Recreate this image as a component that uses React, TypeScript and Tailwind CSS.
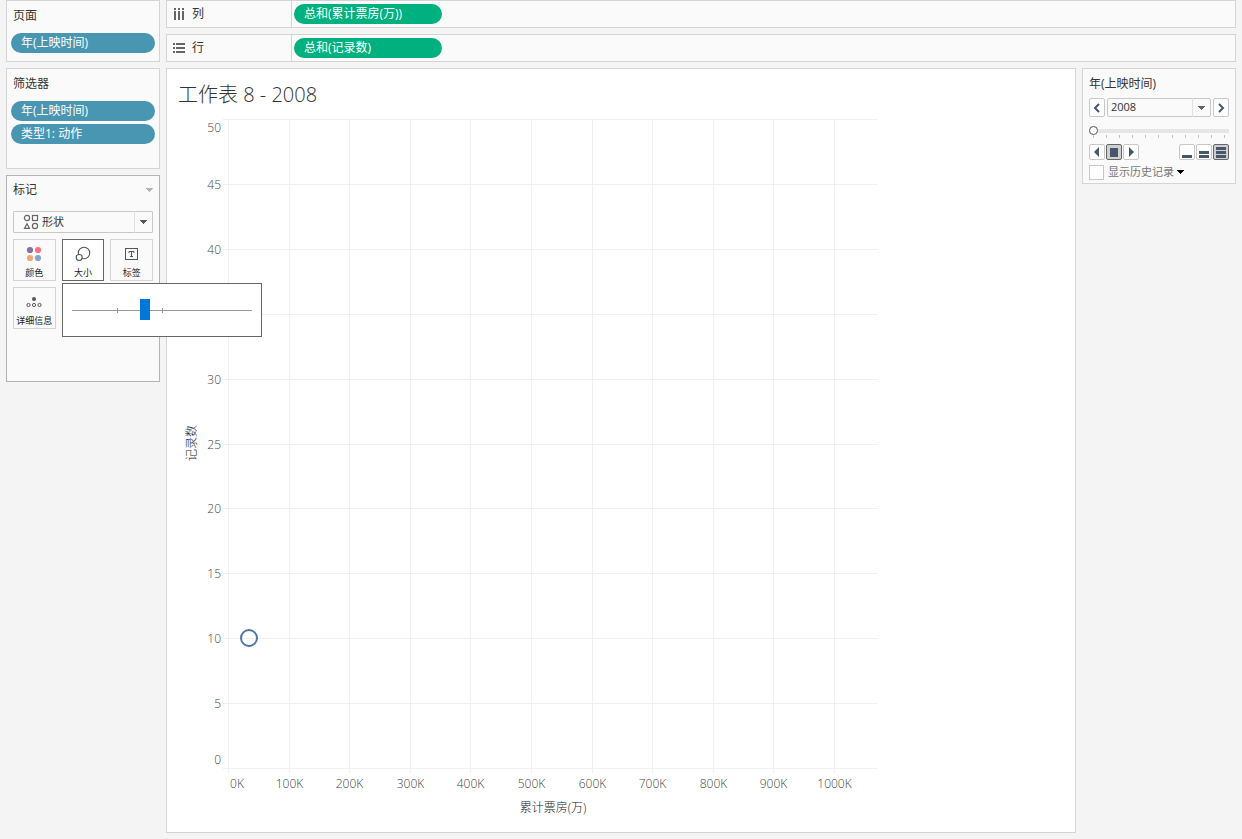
import { useState, type ReactNode } from "react";

const FONT = "font-['Open_Sans','Noto_Sans_CJK_SC',sans-serif]";

// ─── Small parts ──────────────────────────────────────────────────────────

function Caret({ className = "" }: { className?: string }) {
  return (
    <svg className={className} width="7" height="4" viewBox="0 0 7 4" shapeRendering="crispEdges" aria-hidden>
      <path d="M0 0h7L3.5 4z" fill="currentColor" />
    </svg>
  );
}

function Card({ title, children, className }: { title: string; children: ReactNode; className: string }) {
  return (
    <section className={`border border-[#d4d4d4] bg-[#fafafa] px-1 ${className}`}>
      <h2 className="h-7 pl-[2px] text-xs leading-[30px]">{title}</h2>
      <div className="mt-1 flex flex-col gap-[3px]">{children}</div>
    </section>
  );
}

function Pill({ children }: { children: ReactNode }) {
  return (
    <button className="h-5 w-full rounded-full bg-[#4996b2] px-[10px] text-left text-xs leading-5 text-white">
      {children}
    </button>
  );
}

function Shelf({ icon, label, pill }: { icon: ReactNode; label: string; pill: string }) {
  return (
    <section className="flex h-7 border border-[#d4d4d4] bg-[#fafafa]">
      <div className="flex w-[125px] items-center gap-[7px] border-r border-[#d4d4d4] pl-[6px]">
        {icon}
        <h2 className="text-xs leading-7">{label}</h2>
      </div>
      <button className="ml-[2px] mt-[3px] h-5 w-[148px] rounded-full bg-[#00b180] px-[10px] text-left text-xs leading-5 text-white">
        {pill}
      </button>
    </section>
  );
}

// ─── Marks card ───────────────────────────────────────────────────────────

function ShapesIcon({ className = "" }: { className?: string }) {
  return (
    <svg className={className} width="16" height="16" viewBox="0 0 16 16" fill="none" stroke="#666" strokeWidth="1.2">
      <circle cx="4" cy="4" r="2.6" />
      <rect x="9.5" y="1.5" width="5" height="5" />
      <path d="M4 9.8 6.5 14.4h-5z" />
      <circle cx="12" cy="12" r="2.6" />
    </svg>
  );
}

function ColorIcon() {
  return (
    <svg width="16" height="16" viewBox="0 0 16 16">
      <circle cx="4" cy="4" r="3.1" fill="#86709e" />
      <circle cx="12" cy="4" r="3.1" fill="#ff6f80" />
      <circle cx="4" cy="12" r="3.1" fill="#f5a676" />
      <circle cx="12" cy="12" r="3.1" fill="#82a6d0" />
    </svg>
  );
}

function SizeIcon() {
  return (
    <svg width="16" height="16" viewBox="0 0 16 16" stroke="#555" strokeWidth="1.1">
      <circle cx="9" cy="7" r="5.7" fill="none" />
      <circle cx="4.2" cy="11.5" r="3" fill="#fff" />
    </svg>
  );
}

function LabelIcon() {
  return (
    <svg width="16" height="16" viewBox="0 0 16 16" fill="none" stroke="#555">
      <rect x="1.5" y="2.5" width="12" height="11" />
      <path d="M5 7V5.5h5V7M7.5 5.5v5M6 10.5h3" />
    </svg>
  );
}

function DetailIcon() {
  return (
    <svg width="16" height="16" viewBox="0 0 16 16" fill="none" stroke="#555">
      <circle cx="8" cy="5" r="2" fill="#555" stroke="none" />
      <circle cx="2.5" cy="11" r="1.6" />
      <circle cx="8" cy="11" r="1.6" />
      <circle cx="13.5" cy="11" r="1.6" />
    </svg>
  );
}

const MARKS = [
  { label: "颜色", Icon: ColorIcon },
  { label: "大小", Icon: SizeIcon, active: true },
  { label: "标签", Icon: LabelIcon },
  { label: "详细信息", Icon: DetailIcon },
];

function SizePopup() {
  const [size, setSize] = useState(40);
  return (
    <div className="absolute left-[55px] top-[107px] z-10 flex h-[54px] w-[200px] items-center border border-[#666] bg-white px-[9px]">
      <span className="absolute left-[54px] top-6 h-[5px] w-px bg-[#999]" />
      <span className="absolute left-[99px] top-6 h-[5px] w-px bg-[#999]" />
      <input
        type="range"
        aria-label="大小"
        value={size}
        onChange={(e) => setSize(Number(e.target.value))}
        className="relative h-6 w-full appearance-none bg-transparent [&::-webkit-slider-runnable-track]:h-px [&::-webkit-slider-runnable-track]:bg-[#999] [&::-webkit-slider-thumb]:-mt-[11px] [&::-webkit-slider-thumb]:h-[21px] [&::-webkit-slider-thumb]:w-[10px] [&::-webkit-slider-thumb]:appearance-none [&::-webkit-slider-thumb]:bg-[#0078d7]"
      />
    </div>
  );
}

function MarksCard() {
  return (
    <section className="relative h-[207px] border border-[#b3b3b3] bg-[#fafafa] px-[6px]">
      <div className="flex h-7 items-center justify-between">
        <h2 className="text-xs leading-[30px]">标记</h2>
        <Caret className="text-[#b3b3b3]" />
      </div>
      <div className="relative mt-[7px]">
        <select
          aria-label="标记类型"
          className="block h-[22px] w-full appearance-none rounded-[1px] border border-[#c8c8c8] bg-[#fafafa] pl-7 text-[11px]"
        >
          <option>形状</option>
        </select>
        <ShapesIcon className="pointer-events-none absolute left-[10px] top-[3px]" />
        <span className="pointer-events-none absolute right-0 top-0 flex h-[22px] w-[19px] items-center border-l border-[#e0e0e0] pl-[5px] text-[#555]">
          <Caret />
        </span>
      </div>
      <div className="mt-[6px] grid grid-cols-3 gap-[6px]">
        {MARKS.map(({ label, Icon, active }) => (
          <button
            key={label}
            className={`flex h-[42px] flex-col items-center border pt-[6px] text-[9px] leading-[14px] whitespace-nowrap text-[#222] ${
              active ? "border-[#666] bg-white" : "border-[#d4d4d4] bg-[#fafafa]"
            }`}
          >
            <Icon />
            <span className="mt-1">{label}</span>
          </button>
        ))}
      </div>
      <SizePopup />
    </section>
  );
}

// ─── Chart ────────────────────────────────────────────────────────────────

const X_STEPS = [0, 100, 200, 300, 400, 500, 600, 700, 800, 900, 1000];
const Y_STEPS = [0, 5, 10, 15, 20, 25, 30, 35, 40, 45, 50];

const xPos = (v: number) => Math.round(50 + v * 0.606) + 0.5;
const yPos = (v: number) => Math.round(656 - v * 12.98) + 0.5;

function Chart() {
  return (
    <svg className="block font-light" width="710" height="712" viewBox="0 0 710 712" fontSize="12" fill="#444">
      <g stroke="#f0f0f0">
        {X_STEPS.map((v) => (
          <line key={v} x1={xPos(v)} x2={xPos(v)} y1="8" y2="661" />
        ))}
        {Y_STEPS.map((v) => (
          <line key={v} x1="45" x2="700" y1={yPos(v)} y2={yPos(v)} />
        ))}
      </g>
      {Y_STEPS.map((v) => {
        // end labels are pulled inside the plot area
        const shift = v === 0 ? -9 : v === 50 ? 8 : 0;
        return (
          <text key={v} x="43" y={yPos(v) + 4.5 + shift} textAnchor="end">
            {v}
          </text>
        );
      })}
      {X_STEPS.map((v) => (
        <text key={v} x={v === 0 ? 59 : xPos(v)} y="676" textAnchor="middle">
          {v}K
        </text>
      ))}
      <text x="375" y="700" textAnchor="middle" fill="#222">
        累计票房(万)
      </text>
      <text transform="translate(18 331) rotate(-90)" textAnchor="middle" fill="#222">
        记录数
      </text>
      <circle cx="71" cy="526" r="8" fill="none" stroke="#4e79a7" strokeWidth="2" />
    </svg>
  );
}

// ─── Page control ─────────────────────────────────────────────────────────

const stepButton =
  "flex h-[19px] w-4 items-center justify-center rounded-[2px] border border-[#c8c8c8] bg-white";
const playButton = "flex size-4 items-center justify-center rounded-[2px] border";
const playOff = "border-[#c8c8c8] bg-white";
const playOn = "border-[#666] bg-[#d0d0d0]";

const PLAY = [
  { label: "向后播放", d: "M8 1v10L3 6z" },
  { label: "停止", d: "M2 2h8v9H2z", active: true },
  { label: "向前播放", d: "M4 1v10l5-5z" },
];
const SPEED = [
  { label: "慢速", d: "M1 9h10v3H1z" },
  { label: "中速", d: "M1 5h10v3H1zM1 9h10v3H1z" },
  { label: "快速", d: "M1 1h10v3H1zM1 5h10v3H1zM1 9h10v3H1z", active: true },
];

function PlayGroup({ items }: { items: { label: string; d: string; active?: boolean }[] }) {
  return (
    <div className="flex gap-px">
      {items.map((it) => (
        <button key={it.label} aria-label={it.label} className={`${playButton} ${it.active ? playOn : playOff}`}>
          <svg className="shrink-0" width="12" height="12" viewBox="0 0 12 12">
            <path d={it.d} fill="#47566d" />
          </svg>
        </button>
      ))}
    </div>
  );
}

function PageControl() {
  const [page, setPage] = useState(0);
  const [history, setHistory] = useState(false);
  return (
    <aside className="h-[116px] w-[154px] shrink-0 border border-[#d4d4d4] bg-[#fafafa] px-[6px]">
      <h2 className="h-[29px] text-xs leading-[30px]">年(上映时间)</h2>
      <div className="flex gap-[2px]">
        <button aria-label="上一页" className={stepButton}>
          <svg width="8" height="10" viewBox="0 0 8 10" fill="none" stroke="#47566d" strokeWidth="2">
            <path d="M6 1 2 5l4 4" />
          </svg>
        </button>
        <div className="relative grow">
          <select
            aria-label="年(上映时间)"
            className="block h-[19px] w-full appearance-none rounded-[2px] border border-[#c8c8c8] bg-[#fafafa] pl-[3px] text-[11px]"
          >
            <option>2008</option>
          </select>
          <span className="pointer-events-none absolute right-0 top-0 flex h-[19px] w-[19px] items-center border-l border-[#e0e0e0] pl-[5px] text-[#666]">
            <Caret />
          </span>
        </div>
        <button aria-label="下一页" className={stepButton}>
          <svg width="8" height="10" viewBox="0 0 8 10" fill="none" stroke="#47566d" strokeWidth="2">
            <path d="m2 1 4 4-4 4" />
          </svg>
        </button>
      </div>
      <input
        type="range"
        aria-label="页面"
        min={0}
        max={10}
        value={page}
        onChange={(e) => setPage(Number(e.target.value))}
        className="mt-[9px] block h-[10px] w-full appearance-none bg-transparent [&::-webkit-slider-runnable-track]:h-1 [&::-webkit-slider-runnable-track]:bg-[#e6e6e6] [&::-webkit-slider-thumb]:-mt-[3px] [&::-webkit-slider-thumb]:size-[9px] [&::-webkit-slider-thumb]:appearance-none [&::-webkit-slider-thumb]:rounded-full [&::-webkit-slider-thumb]:border [&::-webkit-slider-thumb]:border-[#555] [&::-webkit-slider-thumb]:bg-white"
      />
      <div className="flex h-2 justify-between px-1">
        {Array.from({ length: 11 }, (_, i) => (
          <span key={i} className="-mt-px h-[3px] w-px bg-[#c0c0c0]" />
        ))}
      </div>
      <div className="flex justify-between">
        <PlayGroup items={PLAY} />
        <PlayGroup items={SPEED} />
      </div>
      <div className="mt-1 flex items-center">
        <label className="flex items-center gap-1 text-[11px] leading-4 text-[#777]">
          <input
            type="checkbox"
            checked={history}
            onChange={(e) => setHistory(e.target.checked)}
            className="size-[15px] appearance-none border border-[#c8c8c8] bg-white checked:bg-[#47566d]"
          />
          显示历史记录
        </label>
        <button aria-label="历史记录选项" className="ml-[3px] text-black">
          <Caret />
        </button>
      </div>
    </aside>
  );
}

// ─── Page ─────────────────────────────────────────────────────────────────

function ColumnsIcon() {
  return (
    <svg width="12" height="12" viewBox="0 0 12 12" fill="#666" shapeRendering="crispEdges">
      <path d="M1 0h2v2H1zM5 0h2v2H5zM9 0h2v2H9zM1 3h2v9H1zM5 3h2v9H5zM9 3h2v9H9z" />
    </svg>
  );
}

function RowsIcon() {
  return (
    <svg width="12" height="12" viewBox="0 0 12 12" fill="#666" shapeRendering="crispEdges">
      <path d="M0 1h2v2H0zM0 5h2v2H0zM0 9h2v2H0zM3 1h9v2H3zM3 5h9v2H3zM3 9h9v2H3z" />
    </svg>
  );
}

export default function App() {
  return (
    <div className={`flex min-h-screen gap-[6px] bg-[#f4f4f4] px-[6px] pb-[6px] text-[#333] ${FONT}`}>
      <div className="flex w-[154px] shrink-0 flex-col gap-[6px]">
        <Card title="页面" className="h-[62px]">
          <Pill>年(上映时间)</Pill>
        </Card>
        <Card title="筛选器" className="h-[101px]">
          <Pill>年(上映时间)</Pill>
          <Pill>类型1: 动作</Pill>
        </Card>
        <MarksCard />
      </div>
      <div className="flex min-w-0 grow flex-col gap-[6px]">
        <Shelf icon={<ColumnsIcon />} label="列" pill="总和(累计票房(万))" />
        <Shelf icon={<RowsIcon />} label="行" pill="总和(记录数)" />
        <div className="flex grow gap-[6px]">
          <main className="min-w-0 grow overflow-hidden border border-[#d4d4d4] bg-white pl-[11px]">
            <h1 className="h-[43px] pt-[10px] text-xl leading-8 font-light">工作表 8 - 2008</h1>
            <Chart />
          </main>
          <PageControl />
        </div>
      </div>
    </div>
  );
}
